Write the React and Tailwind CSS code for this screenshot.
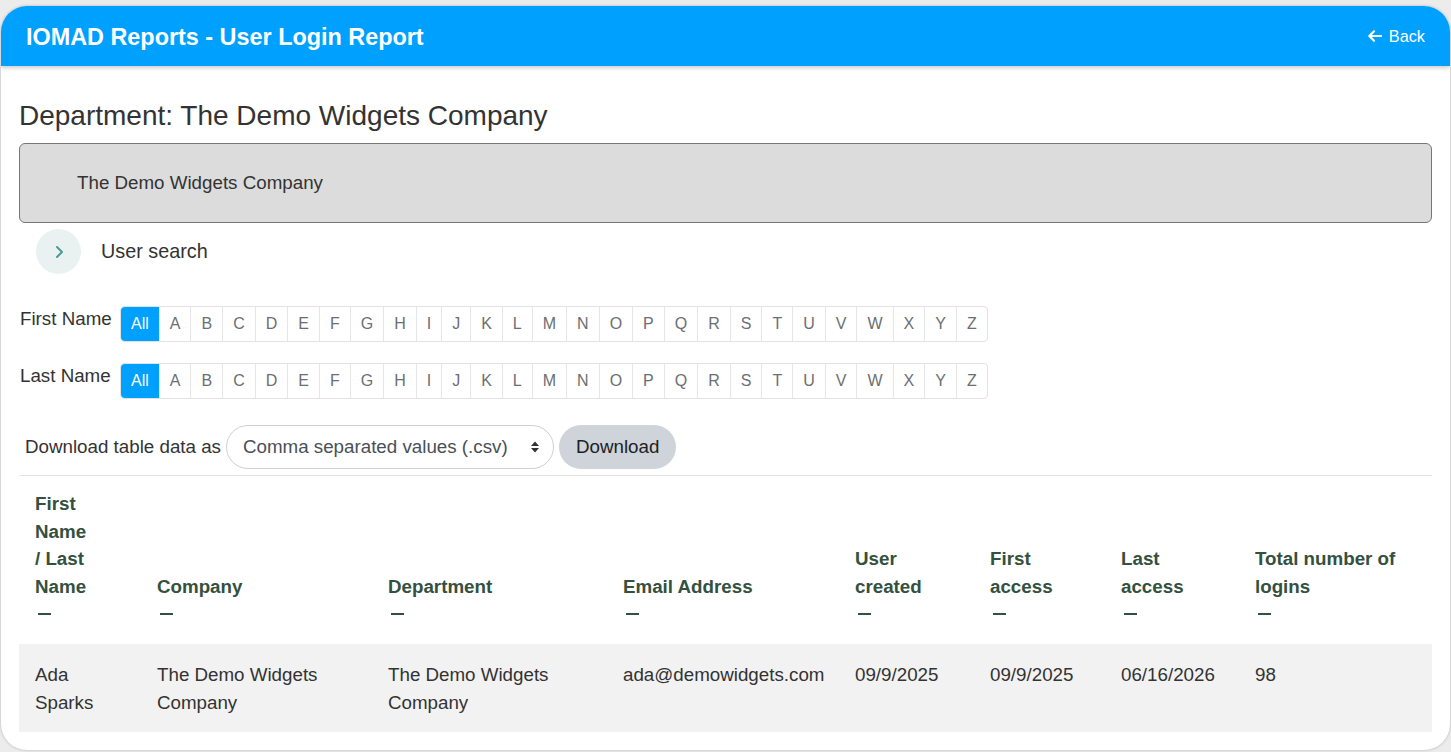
import React from "react";

const letters = ["A","B","C","D","E","F","G","H","I","J","K","L","M","N","O","P","Q","R","S","T","U","V","W","X","Y","Z"];

function LetterBar() {
  return (
    <div className="flex border border-[#e3e3e3] rounded-[4px] bg-white">
      <span className="h-[34px] flex items-center px-[10px] bg-[#00a0ff] text-white rounded-l-[4px] text-[16px]">All</span>
      {letters.map((l) => (
        <span key={l} className="h-[34px] flex items-center px-[10px] border-l border-[#e6e6e6] text-[#6b6f73] text-[16px]">{l}</span>
      ))}
    </div>
  );
}

function Dash() {
  return <div className="h-[28px] flex items-center"><span className="block ml-[3px] w-[13px] h-[2px] bg-[#34503f]"></span></div>;
}

const cols = [
  { title: "First Name / Last Name", w: "w-[122px]", tw: "max-w-[60px]" },
  { title: "Company", w: "w-[231px]", tw: "" },
  { title: "Department", w: "w-[235px]", tw: "" },
  { title: "Email Address", w: "w-[232px]", tw: "" },
  { title: "User created", w: "w-[135px]", tw: "" },
  { title: "First access", w: "w-[131px]", tw: "" },
  { title: "Last access", w: "w-[134px]", tw: "" },
  { title: "Total number of logins", w: "w-[193px]", tw: "" },
];

const row = ["Ada Sparks", "The Demo Widgets Company", "The Demo Widgets Company", "ada@demowidgets.com", "09/9/2025", "09/9/2025", "06/16/2026", "98"];

export default function App() {
  return (
    <div className="w-full h-[752px] bg-[#ececec] pt-[6px] px-[1px] overflow-hidden" style={{ fontFamily: '"Liberation Sans", Arial, sans-serif' }}>
      <div className="h-[744px] bg-white rounded-[26px] overflow-hidden shadow-[0_0_3px_rgba(0,0,0,0.25)]">
        <div className="h-[60px] bg-[#00a0ff] flex items-center justify-between pl-[25px] pr-[25px] shadow-[0_2px_4px_rgba(0,0,0,0.2)]">
          <h1 className="mt-[4px] text-white font-bold text-[23.4px]">IOMAD Reports - User Login Report</h1>
          <div className="flex items-center gap-[7px] text-white text-[16.3px]">
            <svg width="14" height="12" viewBox="0 0 14 12" fill="none" stroke="white" strokeWidth="2.2" strokeLinecap="round" strokeLinejoin="round">
              <path d="M13 6H1.5M6 1.3L1.3 6L6 10.7" />
            </svg>
            <span>Back</span>
          </div>
        </div>

        <div className="px-[18px] text-[#333] text-[18.75px]">
          <h2 className="mt-[33px] text-[28px] leading-[34px] text-[#333]">Department: The Demo Widgets Company</h2>
          <div className="mt-[10px] h-[80px] bg-[#dcdcdc] border border-[#777] rounded-[6px] flex items-center pl-[57px] text-[18.75px] text-[#333]">
            The Demo Widgets Company
          </div>
          <div className="mt-[6px] flex items-center ml-[17px]">
            <div className="w-[45px] h-[45px] rounded-full bg-[#eaf2f1] flex items-center justify-center">
              <svg width="10" height="14" viewBox="0 0 10 14" fill="none" stroke="#4a9b95" strokeWidth="2" strokeLinecap="round" strokeLinejoin="round">
                <path d="M3 2L8 7L3 12" />
              </svg>
            </div>
            <span className="ml-[20px] text-[19.8px] text-[#333]">User search</span>
          </div>

          <div className="mt-[32px] flex items-start">
            <span className="leading-[28px] ml-[1px] w-[90px] mr-[10px] -mt-[1px] whitespace-nowrap">First Name</span>
            <LetterBar />
          </div>
          <div className="mt-[21px] flex items-start">
            <span className="leading-[28px] ml-[1px] w-[90px] mr-[10px] -mt-[1px] whitespace-nowrap">Last Name</span>
            <LetterBar />
          </div>

          <div className="mt-[26px] flex items-center pl-[6px]">
            <span className="text-[18.75px]">Download table data as</span>
            <div className="ml-[5px] h-[44px] w-[328px] border border-[#d0d0d0] rounded-full flex items-center justify-between pl-[16px] pr-[13px] text-[#495057]">
              <span>Comma separated values (.csv)</span>
              <svg width="10" height="14" viewBox="0 0 10 14" fill="#333">
                <path d="M5 1.5L9 6H1z M5 12.5L1 8H9z" />
              </svg>
            </div>
            <div className="ml-[5px] h-[44px] px-[17px] rounded-full bg-[#ced4da] flex items-center text-[#1d2125]">Download</div>
          </div>
          <div className="mt-[6px] border-t border-[#e4e4e4]"></div>

          <table className="table-fixed w-full border-collapse">
            <thead>
              <tr>
                {cols.map((c) => (
                  <th key={c.title} className={`${c.w} align-bottom text-left font-bold text-[#34503f] leading-[27.6px] px-[16px] pt-[14px] pb-[16px]`}>
                    <div className={c.tw}>{c.title}</div>
                    <Dash />
                  </th>
                ))}
              </tr>
            </thead>
            <tbody>
              <tr className="bg-[#f2f2f2]">
                {row.map((v, i) => (
                  <td key={i} className="align-top px-[16px] pt-[17px] pb-[15px] leading-[28px] text-[#333]">{v}</td>
                ))}
              </tr>
            </tbody>
          </table>
        </div>
      </div>
    </div>
  );
}
